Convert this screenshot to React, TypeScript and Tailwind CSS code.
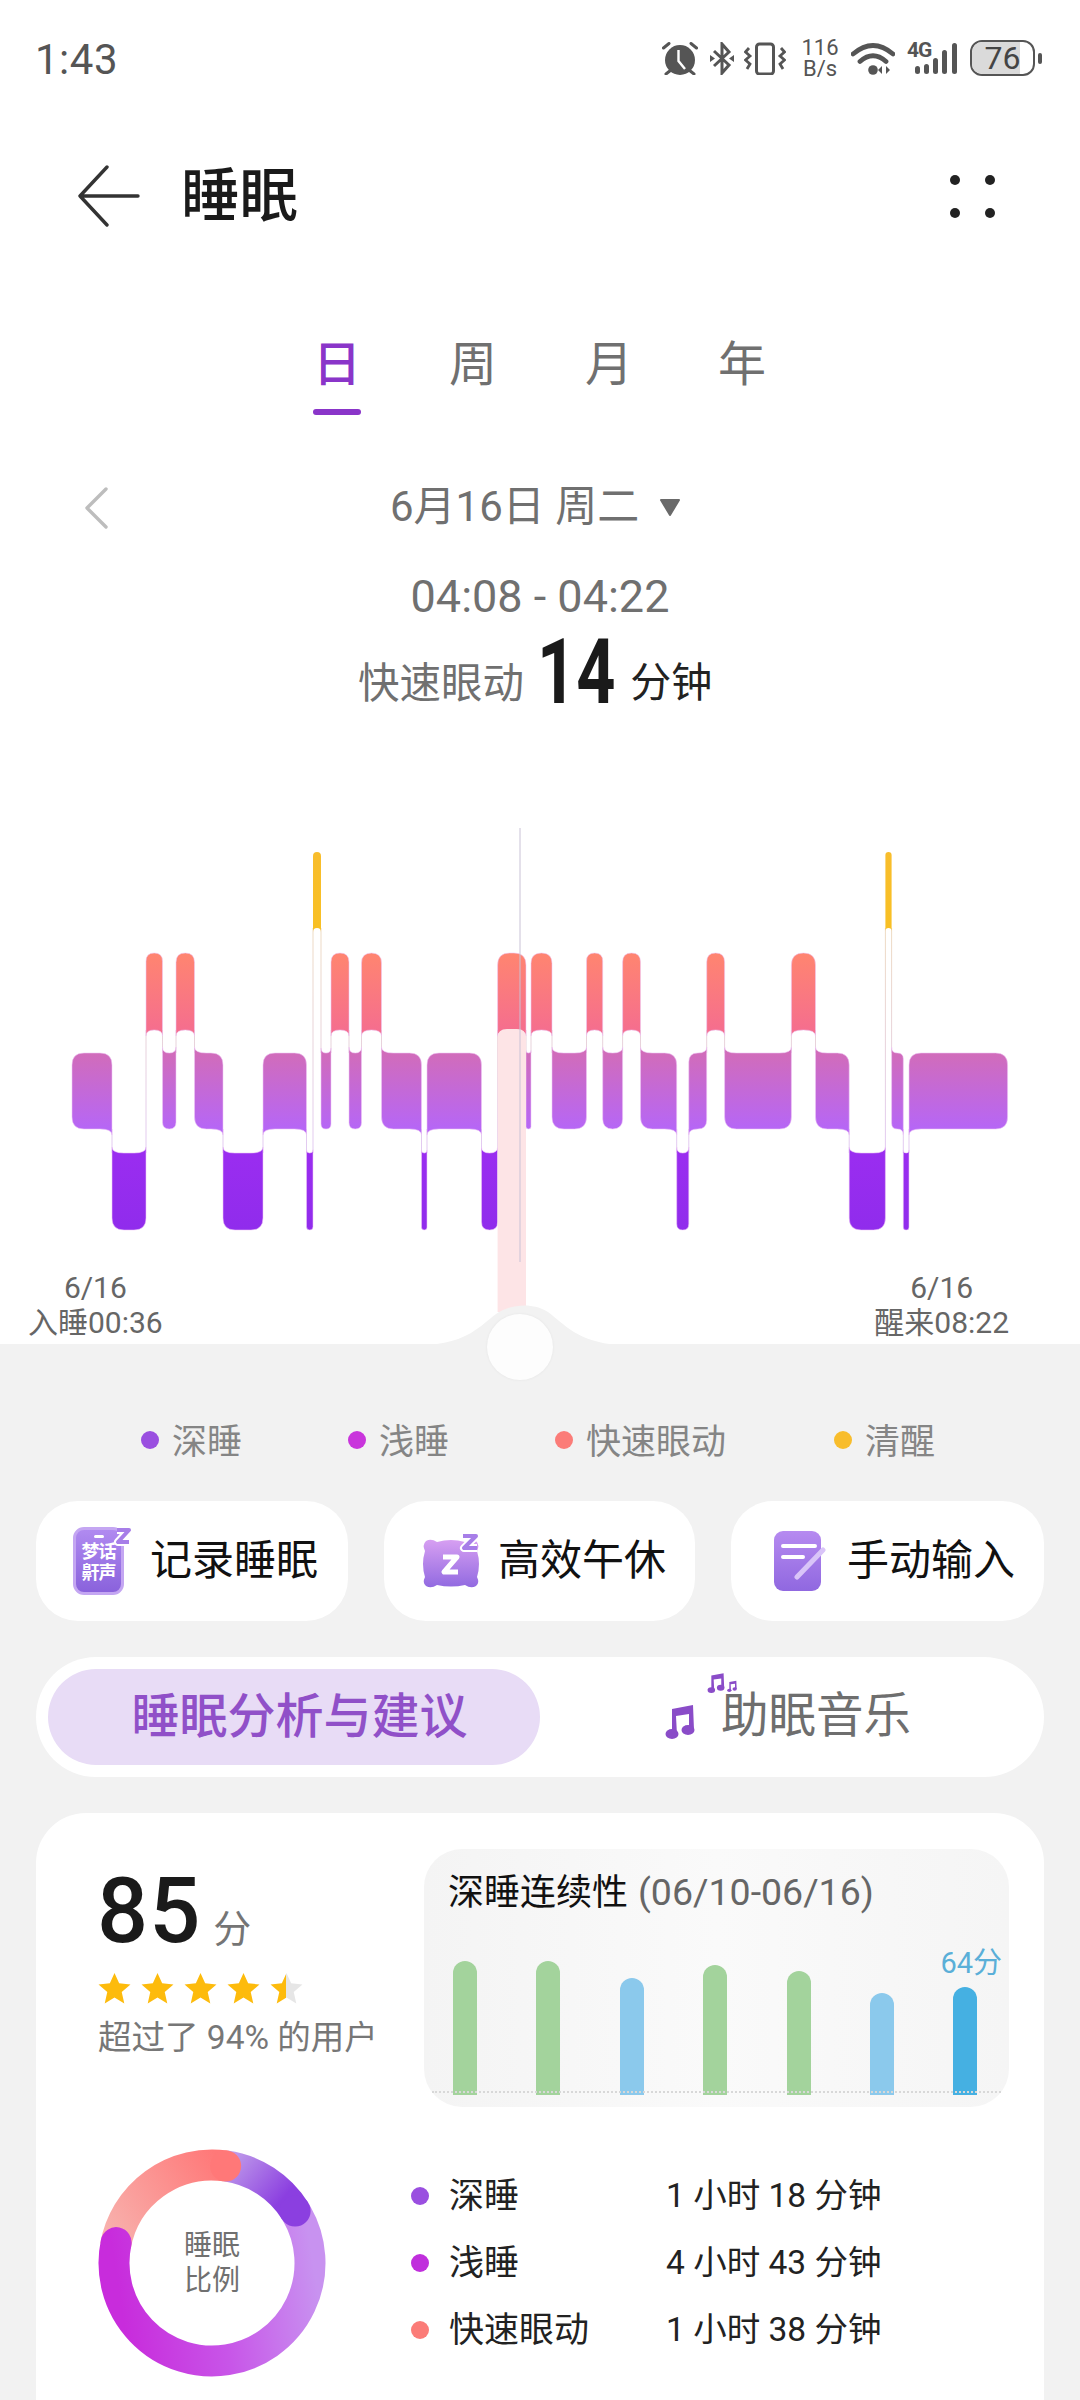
import React from "react";

type Level = "awake" | "rem" | "light" | "deep";

const bands: Record<Level, { top: number; bot: number; rank: number; fill: string }> = {
  awake: { top: 852, bot: 928, rank: 0, fill: "url(#awakeFill)" },
  rem: { top: 953, bot: 1030, rank: 1, fill: "url(#remFill)" },
  light: { top: 1053, bot: 1129, rank: 2, fill: "url(#lightFill)" },
  deep: { top: 1153, bot: 1230, rank: 3, fill: "url(#deepFill)" },
};

const segments: [Level, number, number][] = [
  ["light", 72, 112],
  ["deep", 112, 146],
  ["rem", 146, 162.5],
  ["light", 162.5, 176],
  ["rem", 176, 194.5],
  ["light", 194.5, 223],
  ["deep", 223, 263],
  ["light", 263, 306.5],
  ["deep", 306.5, 313],
  ["awake", 313, 321],
  ["light", 321, 331],
  ["rem", 331, 349],
  ["light", 349, 361.5],
  ["rem", 361.5, 381.5],
  ["light", 381.5, 421.5],
  ["deep", 421.5, 427],
  ["light", 427, 481.5],
  ["deep", 481.5, 497.6],
  ["rem", 497.6, 526],
  ["light", 526, 531],
  ["rem", 531, 552],
  ["light", 552, 586.5],
  ["rem", 586.5, 602.7],
  ["light", 602.7, 622.6],
  ["rem", 622.6, 640.5],
  ["light", 640.5, 676.7],
  ["deep", 676.7, 688.8],
  ["light", 688.8, 706.7],
  ["rem", 706.7, 724.6],
  ["light", 724.6, 791.4],
  ["rem", 791.4, 815.5],
  ["light", 815.5, 849.2],
  ["deep", 849.2, 885.4],
  ["awake", 885.4, 891.6],
  ["light", 891.6, 903.3],
  ["deep", 903.3, 909],
  ["light", 909, 1007.6],
];

// outline of one block: convex corners on the outside, small flares toward a neighbour band
function segmentPath(i: number) {
  const [level, x0, x1] = segments[i];
  const { top, bot, rank } = bands[level];
  const left = i > 0 ? bands[segments[i - 1][0]].rank : null;
  const right = i < segments.length - 1 ? bands[segments[i + 1][0]].rank : null;
  const r = Math.min(12, (x1 - x0) / 2);
  const f = Math.min(6, (x1 - x0) / 2);
  let d = "";
  if (left !== null && left < rank) d += `M${x0} ${top - f} Q${x0} ${top} ${x0 + r} ${top} `;
  else d += `M${x0} ${top + r} Q${x0} ${top} ${x0 + r} ${top} `;
  if (right !== null && right < rank) d += `L${x1 - r} ${top} Q${x1} ${top} ${x1} ${top - f} `;
  else d += `L${x1 - r} ${top} Q${x1} ${top} ${x1} ${top + r} `;
  if (right !== null && right > rank) d += `L${x1} ${bot + f} Q${x1} ${bot} ${x1 - r} ${bot} `;
  else d += `L${x1} ${bot - r} Q${x1} ${bot} ${x1 - r} ${bot} `;
  if (left !== null && left > rank) d += `L${x0 + r} ${bot} Q${x0} ${bot} ${x0} ${bot + f} `;
  else d += `L${x0 + r} ${bot} Q${x0} ${bot} ${x0} ${bot - r} `;
  return d + "Z";
}

function SleepChart() {
  return (
    <svg viewBox="0 820 1080 450" className="block h-[450px] w-[1080px] shrink-0 overflow-visible">
      <defs>
        <linearGradient id="awakeFill" x1="0" y1="852" x2="0" y2="928" gradientUnits="userSpaceOnUse">
          <stop offset="0" stopColor="#f8bd2c" />
          <stop offset="1" stopColor="#f8c024" />
        </linearGradient>
        <linearGradient id="remFill" x1="0" y1="953" x2="0" y2="1030" gradientUnits="userSpaceOnUse">
          <stop offset="0" stopColor="#ff8570" />
          <stop offset="1" stopColor="#f56e8e" />
        </linearGradient>
        <linearGradient id="lightFill" x1="0" y1="1053" x2="0" y2="1129" gradientUnits="userSpaceOnUse">
          <stop offset="0" stopColor="#d16cba" />
          <stop offset="1" stopColor="#b666f6" />
        </linearGradient>
        <linearGradient id="deepFill" x1="0" y1="1153" x2="0" y2="1230" gradientUnits="userSpaceOnUse">
          <stop offset="0" stopColor="#9a2df0" />
          <stop offset="1" stopColor="#902cec" />
        </linearGradient>
        <linearGradient id="joinLine" x1="0" y1="928" x2="0" y2="1153" gradientUnits="userSpaceOnUse">
          <stop offset="0" stopColor="#e8cfae" />
          <stop offset="1" stopColor="#d8b8ee" />
        </linearGradient>
      </defs>
      {segments.slice(0, -1).map(([level, , x1], i) => {
        const a = bands[level];
        const b = bands[segments[i + 1][0]];
        const upper = a.rank < b.rank ? a : b;
        const lower = a.rank < b.rank ? b : a;
        return <line key={i} x1={x1} x2={x1} y1={upper.bot} y2={lower.top} stroke="url(#joinLine)" strokeOpacity="0.75" strokeWidth="1" />;
      })}
      {segments.map(([level], i) => (
        <path key={i} d={segmentPath(i)} fill={bands[level].fill} stroke={level === "awake" ? "none" : "#eec6f6"} strokeOpacity="0.55" strokeWidth="1" />
      ))}
      <path d="M497.6 1312 L497.6 1038 Q497.6 1029 507 1029 L517 1029 Q526 1029 526 1038 L526 1312 Z" fill="#fde4e6" />
      <line x1="520" x2="520" y1="828" y2="1262" stroke="#c9c2d6" strokeWidth="1" />
    </svg>
  );
}

function AlarmIcon() {
  return (
    <svg viewBox="0 0 36 33" className="h-[33px] w-[36px]">
      <circle cx="18" cy="18" r="15" fill="#555" />
      <path d="M16.5 8 L16.5 19 L23 27" fill="none" stroke="#fff" strokeWidth="2.4" />
      <path d="M1.5 6 L7 1.5 M34.5 6 L29 1.5 M4 32 L9 28 M32 32 L27 28" stroke="#555" strokeWidth="3" strokeLinecap="round" />
    </svg>
  );
}

function BluetoothIcon() {
  return (
    <svg viewBox="0 0 24 33" className="h-[33px] w-[24px]">
      <path d="M4 9 L19 23 L12 31 L12 2 L19 10 L4 24" fill="none" stroke="#555" strokeWidth="3" />
      <path d="M0 13 L5 16.5 L0 20 Z M24 13 L19 16.5 L24 20 Z" fill="#555" />
    </svg>
  );
}

function VibrateIcon() {
  return (
    <svg viewBox="0 0 42 33" className="h-[33px] w-[42px]">
      <rect x="12.5" y="2" width="17" height="30" rx="3" fill="none" stroke="#555" strokeWidth="3" />
      <path d="M5 6 L1.5 10 L6 14 L1.5 18 L6 22 L3 27 M37 6 L40.5 10 L36 14 L40.5 18 L36 22 L39 27" fill="none" stroke="#555" strokeWidth="2.8" />
    </svg>
  );
}

function WifiIcon() {
  return (
    <svg viewBox="0 0 44 33" className="h-[33px] w-[44px]">
      <path d="M2 12 Q22 -5 42 12 M9 19.5 Q22 8 35 19.5" fill="none" stroke="#555" strokeWidth="4.8" strokeLinecap="round" />
      <circle cx="22" cy="28" r="4.8" fill="#555" />
      <path d="M31 24 L31 32 L27 28 Z M35 24 L35 32 L39 28 Z" fill="#555" />
    </svg>
  );
}

function SignalIcon() {
  const bars = [
    [8, 8],
    [17, 10],
    [26, 16],
    [35, 24],
    [45, 31],
  ];
  return (
    <div className="relative h-[33px] w-[50px]">
      <span className="absolute left-0 top-[-3px] text-[21px] font-bold leading-[22px] tracking-[-1px] text-[#555]">4G</span>
      <svg viewBox="0 0 50 33" className="absolute left-0 top-0 h-[33px] w-[50px]">
        {bars.map(([x, h]) => (
          <rect key={x} x={x} y={32 - h} width="5" height={h} rx="2.5" fill="#555" />
        ))}
      </svg>
    </div>
  );
}

function StatusBar() {
  return (
    <div className="flex h-[116px] shrink-0 items-center justify-between pl-[35px] pr-[38px]">
      <span className="pt-[2px] text-[42px] tracking-[0.5px] text-[#555]">1:43</span>
      <div className="flex items-center">
        <AlarmIcon />
        <div className="ml-[12px]"><BluetoothIcon /></div>
        <div className="ml-[10px]"><VibrateIcon /></div>
        <div className="ml-[16px] flex w-[36px] flex-col items-center text-[22px] leading-[21px] text-[#555]">
          <span>116</span>
          <span>B/s</span>
        </div>
        <div className="ml-[13px]"><WifiIcon /></div>
        <div className="ml-[12px]"><SignalIcon /></div>
        <div className="relative ml-[13px] flex h-[36px] w-[65px] items-center justify-center overflow-hidden rounded-[12px] border-[2.5px] border-[#555]">
          <div className="absolute inset-y-0 left-0 w-[48px] bg-[#dadada]" />
          <span className="relative text-[32px] text-[#444]">76</span>
        </div>
        <div className="ml-[3px] h-[11px] w-[4px] rounded-full bg-[#555]" />
      </div>
    </div>
  );
}

function Header() {
  return (
    <div className="flex h-[160px] shrink-0 items-center">
      <svg viewBox="0 0 62 64" className="ml-[78px] h-[64px] w-[62px]">
        <path d="M29 3 L2 32 L29 61 M2 32 L60 32" fill="none" stroke="#333" strokeWidth="3.4" strokeLinecap="round" strokeLinejoin="round" />
      </svg>
      <span className="ml-[41px] text-[58.5px] font-medium leading-none text-[#1a1a1a]">睡眠</span>
      <div className="ml-auto mr-[85px] grid grid-cols-2 gap-x-[25px] gap-y-[23px]">
        <span className="h-[10px] w-[10px] rounded-full bg-[#222]" />
        <span className="h-[10px] w-[10px] rounded-full bg-[#222]" />
        <span className="h-[10px] w-[10px] rounded-full bg-[#222]" />
        <span className="h-[10px] w-[10px] rounded-full bg-[#222]" />
      </div>
    </div>
  );
}

function PeriodTabs() {
  return (
    <div className="flex h-[139px] shrink-0 items-start pl-[313px] pt-[60px]">
      <div className="flex w-[48px] flex-col items-center">
        <span className="text-[48px] font-medium leading-[58px] text-[#8a35c9]">日</span>
        <span className="mt-[15px] h-[6px] w-[48px] rounded-full bg-[#8a35c9]" />
      </div>
      <span className="ml-[88px] w-[48px] text-[48px] leading-[58px] text-[#707070]">周</span>
      <span className="ml-[88px] w-[48px] text-[48px] leading-[58px] text-[#707070]">月</span>
      <span className="ml-[85px] w-[48px] text-[48px] leading-[58px] text-[#707070]">年</span>
    </div>
  );
}

function DateBlock() {
  return (
    <div className="flex h-[405px] shrink-0 flex-col">
      <div className="relative mt-[62px] flex h-[60px] items-center pl-[390px]">
        <svg viewBox="0 0 24 42" className="absolute left-[84px] top-[10px] h-[42px] w-[24px]">
          <path d="M22 2 L3 21 L22 40" fill="none" stroke="#bdbdbd" strokeWidth="3.4" strokeLinecap="round" strokeLinejoin="round" />
        </svg>
        <span className="text-[42px] leading-none text-[#707070]">6月16日 周二</span>
        <svg viewBox="0 0 22 18" className="ml-[20px] h-[18px] w-[22px]">
          <path d="M2 2 L20 2 L11 17 Z" fill="#6a6a6a" stroke="#6a6a6a" strokeWidth="2" strokeLinejoin="round" />
        </svg>
      </div>
      <div className="mt-[31px] flex h-[56px] items-center justify-center text-[45px] leading-none text-[#707070]">04:08 - 04:22</div>
      <div className="flex h-[100px] items-center pl-[358px]">
        <span className="mt-[20px] text-[41.5px] leading-none text-[#707070]">快速眼动</span>
        <span className="mb-[3px] ml-[13px] mr-[-25px] inline-block origin-left scale-x-[0.76] text-[90px] font-bold leading-[100px] text-[#1a1a1a]">14</span>
        <span className="ml-[15px] mt-[18px] text-[41px] leading-none text-[#222]">分钟</span>
      </div>
    </div>
  );
}

function ChartLabels() {
  return (
    <div className="flex h-[74px] shrink-0 items-start justify-between pl-[28px] pr-[71px] text-[30px] leading-[35px] text-[#666]">
      <div className="flex flex-col items-center">
        <span>6/16</span>
        <span>入睡00:36</span>
      </div>
      <div className="flex flex-col items-center">
        <span>6/16</span>
        <span>醒来08:22</span>
      </div>
    </div>
  );
}

function Legend() {
  const items = [
    { label: "深睡", dot: "bg-[#9a4fe0]", width: "w-[207px]" },
    { label: "浅睡", dot: "bg-[#c935dc]", width: "w-[207px]" },
    { label: "快速眼动", dot: "bg-[#fb7c78]", width: "w-[279px]" },
    { label: "清醒", dot: "bg-[#f8bd2c]", width: "w-[200px]" },
  ];
  return (
    <div className="flex h-[50px] items-center pl-[141px]">
      {items.map((item) => (
        <div key={item.label} className={`flex items-center gap-[13px] ${item.width}`}>
          <span className={`h-[18px] w-[18px] rounded-full ${item.dot}`} />
          <span className="pt-[4px] text-[35px] leading-none text-[#858585]">{item.label}</span>
        </div>
      ))}
    </div>
  );
}

function DreamIcon() {
  return (
    <div className="relative h-[68px] w-[58px]">
      <div className="flex h-[68px] w-[51px] flex-col items-center rounded-[11px] border-[3px] border-[#c4a6f2] bg-linear-to-b from-[#b08af0] to-[#8a62dc] pt-[5px]">
        <span className="h-[3px] w-[10px] rounded-full bg-white" />
        <span className="mt-[3px] text-[18px] font-bold leading-[21px] tracking-[-1px] text-white">梦话</span>
        <span className="text-[18px] font-bold leading-[21px] tracking-[-1px] text-white">鼾声</span>
      </div>
      <svg viewBox="0 0 22 22" className="absolute right-[-3px] top-[-2px] h-[22px] w-[22px]">
        <path d="M5 5 L17 5 L6 17 L17 17" fill="none" stroke="#fff" strokeWidth="8" strokeLinejoin="round" />
        <path d="M5 5 L17 5 L6 17 L17 17" fill="none" stroke="#a77ee8" strokeWidth="4" strokeLinejoin="round" />
      </svg>
    </div>
  );
}

function NapIcon() {
  return (
    <svg viewBox="0 0 60 56" className="h-[56px] w-[60px]">
      <defs>
        <linearGradient id="napFill" x1="0" y1="6" x2="0" y2="56" gradientUnits="userSpaceOnUse">
          <stop offset="0" stopColor="#d8a0f2" />
          <stop offset="1" stopColor="#8f68e0" />
        </linearGradient>
      </defs>
      <path d="M5 8 Q10 5 16 9 Q30 5 44 9 Q50 5 55 8 Q59 12 56 18 Q60 31 56 44 Q59 50 55 53 Q50 56 44 52 Q30 55 16 52 Q10 56 5 53 Q1 50 4 44 Q0 31 4 18 Q1 12 5 8 Z" fill="url(#napFill)" />
      <path d="M22 24 L36 24 L23 39 L37 39" fill="none" stroke="#fff" strokeWidth="5" strokeLinejoin="round" />
      <path d="M42 3 L55 3 L43 15 L56 15" fill="none" stroke="#fff" strokeWidth="8" strokeLinejoin="round" />
      <path d="M42 3 L55 3 L43 15 L56 15" fill="none" stroke="#a77ee8" strokeWidth="4" strokeLinejoin="round" />
    </svg>
  );
}

function EntryIcon() {
  return (
    <svg viewBox="0 0 52 60" className="h-[60px] w-[52px]">
      <defs>
        <linearGradient id="entryFill" x1="0" y1="0" x2="0" y2="60" gradientUnits="userSpaceOnUse">
          <stop offset="0" stopColor="#b68af0" />
          <stop offset="1" stopColor="#9068e0" />
        </linearGradient>
      </defs>
      <rect x="0" y="0" width="47" height="60" rx="9" fill="url(#entryFill)" />
      <path d="M9 15 L41 15 M9 26 L29 26" stroke="#fff" strokeWidth="4" strokeLinecap="round" />
      <path d="M23 46 L49 19" stroke="#d9c4f8" strokeWidth="5" strokeLinecap="round" />
    </svg>
  );
}

function QuickActions() {
  return (
    <div className="mt-[36px] flex gap-[36px] px-[36px]">
      <div className="flex h-[120px] w-[312px] items-center gap-[19px] rounded-[42px] bg-white pl-[37px]">
        <DreamIcon />
        <span className="text-[42px] leading-none text-[#111]">记录睡眠</span>
      </div>
      <div className="flex h-[120px] w-[311px] items-center gap-[17px] rounded-[42px] bg-white pl-[37px]">
        <NapIcon />
        <span className="text-[42px] leading-none text-[#111]">高效午休</span>
      </div>
      <div className="flex h-[120px] w-[313px] items-center gap-[21px] rounded-[42px] bg-white pl-[43px]">
        <EntryIcon />
        <span className="text-[42px] leading-none text-[#111]">手动输入</span>
      </div>
    </div>
  );
}

function NoteGlyph({ className }: { className: string }) {
  return (
    <svg viewBox="0 0 30 36" className={className}>
      <path d="M7 6 L28 2 L29 27 L24 27 L24 11 L11 13 L12 32 L7 32 Z" fill="#8a4cc8" />
      <ellipse cx="7" cy="31" rx="6.5" ry="5" fill="#8a4cc8" />
      <ellipse cx="23" cy="27" rx="6.5" ry="5" fill="#8a4cc8" />
    </svg>
  );
}

function AnalysisTabs() {
  return (
    <div className="mx-[36px] mt-[36px] flex h-[120px] items-center rounded-[60px] bg-white pl-[12px]">
      <div className="flex h-[96px] w-[492px] items-center justify-center rounded-[48px] bg-[#e8dcf6] pl-[11px] text-[48px] font-medium leading-none text-[#9050c8]">睡眠分析与建议</div>
      <div className="relative flex h-[96px] flex-1 items-center pl-[125px]">
        <NoteGlyph className="mt-[8px] h-[36px] w-[30px]" />
        <span className="ml-[26px] text-[47.5px] leading-none text-[#6e6e6e]">助眠音乐</span>
        <NoteGlyph className="absolute left-[167px] top-[3px] h-[21px] w-[18px]" />
        <NoteGlyph className="absolute left-[187px] top-[11px] h-[12px] w-[10px]" />
      </div>
    </div>
  );
}

function Stars() {
  const star = "16,1 20.5,11 31.5,12 23,19.5 25.5,30.5 16,24.8 6.5,30.5 9,19.5 0.5,12 11.5,11";
  return (
    <div className="flex gap-[10px]">
      {[0, 1, 2, 3].map((i) => (
        <svg key={i} viewBox="0 0 32 32" className="h-[33px] w-[33px]">
          <polygon points={star} fill="#fdbb0c" />
        </svg>
      ))}
      <svg viewBox="0 0 32 32" className="h-[33px] w-[33px]">
        <defs>
          <linearGradient id="halfStar" x1="0" y1="0" x2="1" y2="0">
            <stop offset="0.5" stopColor="#fdbb0c" />
            <stop offset="0.5" stopColor="#e6e6e6" />
          </linearGradient>
        </defs>
        <polygon points={star} fill="url(#halfStar)" />
      </svg>
    </div>
  );
}

function ContinuityPanel() {
  const bars = [
    { h: "h-[134px]", c: "bg-[#a3d39c]" },
    { h: "h-[134px]", c: "bg-[#a3d39c]" },
    { h: "h-[117px]", c: "bg-[#8bc9ec]" },
    { h: "h-[130px]", c: "bg-[#a3d39c]" },
    { h: "h-[124px]", c: "bg-[#a3d39c]" },
    { h: "h-[102px]", c: "bg-[#8bc9ec]" },
    { h: "h-[108px]", c: "bg-[#45b0e2]" },
  ];
  return (
    <div className="relative flex h-[258px] w-[585px] flex-col rounded-[38px] bg-linear-to-r from-[#f4f4f4] via-[#fafafa] to-[#f5f5f5] pl-[24px]">
      <div className="mt-[24px] flex h-[40px] items-center">
        <span className="text-[36px] leading-none text-[#111]">深睡连续性</span>
        <span className="ml-[10px] text-[37.5px] leading-none text-[#666]">(06/10-06/16)</span>
      </div>
      <div className="absolute bottom-[12px] left-[29px] flex items-end gap-[59.4px]">
        {bars.map((bar, i) => (
          <div key={i} className={`w-[24px] rounded-t-full ${bar.h} ${bar.c}`} />
        ))}
      </div>
      <div className="absolute bottom-[14px] left-[8px] right-[8px] border-t-2 border-dotted border-[#d8d8d8]" />
      <span className="absolute right-[7px] top-[97px] text-[29px] leading-[34px] text-[#5aafd8]">64分</span>
    </div>
  );
}

function polar(angle: number) {
  const rad = ((angle - 90) * Math.PI) / 180;
  return { x: 114 + 98 * Math.cos(rad), y: 114 + 98 * Math.sin(rad) };
}

function arc(a0: number, a1: number) {
  const p0 = polar(a0);
  const p1 = polar(a1);
  const large = a1 - a0 > 180 ? 1 : 0;
  return `M${p0.x} ${p0.y} A98 98 0 ${large} 1 ${p1.x} ${p1.y}`;
}

function Donut() {
  const remEnd = polar(8);
  return (
    <div className="relative h-[228px] w-[228px] shrink-0">
      <svg viewBox="0 0 228 228" className="h-[228px] w-[228px]">
        <defs>
          <linearGradient id="donutDeep" x1="125" y1="16" x2="190" y2="70" gradientUnits="userSpaceOnUse">
            <stop offset="0" stopColor="#c09cea" />
            <stop offset="0.8" stopColor="#8b3fe0" />
          </linearGradient>
          <linearGradient id="donutLight" x1="210" y1="80" x2="16" y2="110" gradientUnits="userSpaceOnUse">
            <stop offset="0" stopColor="#c892f0" />
            <stop offset="0.5" stopColor="#c855e8" />
            <stop offset="1" stopColor="#c82cdc" />
          </linearGradient>
          <linearGradient id="donutRem" x1="16" y1="90" x2="125" y2="16" gradientUnits="userSpaceOnUse">
            <stop offset="0" stopColor="#f8b0ac" />
            <stop offset="1" stopColor="#ff7878" />
          </linearGradient>
        </defs>
        <path d={arc(280, 368)} fill="none" stroke="url(#donutRem)" strokeWidth="31" />
        <path d={arc(60, 282)} fill="none" stroke="url(#donutLight)" strokeWidth="31" strokeLinecap="round" />
        <path d={arc(8, 58)} fill="none" stroke="url(#donutDeep)" strokeWidth="31" />
        <circle cx={polar(58).x} cy={polar(58).y} r="15.5" fill="#8b3fe0" />
        <circle cx={remEnd.x} cy={remEnd.y} r="15.5" fill="#ff7878" />
      </svg>
      <div className="absolute inset-0 flex flex-col items-center justify-center text-[28px] leading-[35px] text-[#707070]">
        <span>睡眠</span>
        <span>比例</span>
      </div>
    </div>
  );
}

function StageList() {
  const rows = [
    { label: "深睡", value: "1 小时 18 分钟", dot: "bg-[#9a4fe0]" },
    { label: "浅睡", value: "4 小时 43 分钟", dot: "bg-[#c02fdc]" },
    { label: "快速眼动", value: "1 小时 38 分钟", dot: "bg-[#fb7c78]" },
  ];
  return (
    <div className="ml-[85px] mt-[13px] flex flex-col">
      {rows.map((row) => (
        <div key={row.label} className="flex h-[67px] items-center leading-none text-[#222]">
          <span className={`h-[18px] w-[18px] rounded-full ${row.dot}`} />
          <span className="ml-[20px] w-[217px] pt-[2px] text-[35px]">{row.label}</span>
          <span className="whitespace-nowrap text-[33.5px]">{row.value}</span>
        </div>
      ))}
    </div>
  );
}

function ScoreCard() {
  return (
    <div className="mx-[36px] mt-[36px] flex-1 rounded-t-[50px] bg-white pl-[62px] pt-[36px]">
      <div className="flex">
        <div className="flex w-[326px] flex-col pt-[13px]">
          <div className="flex h-[100px] items-baseline">
            <span className="ml-[-1px] text-[90px] font-medium leading-[100px] tracking-[1px] text-[#1a1a1a]">85</span>
            <span className="ml-[12px] text-[38px] leading-none text-[#757575]">分</span>
          </div>
          <div className="mt-[10px]"><Stars /></div>
          <span className="mt-[14px] whitespace-nowrap text-[33.5px] leading-[38px] text-[#777]">超过了 94% 的用户</span>
        </div>
        <ContinuityPanel />
      </div>
      <div className="mt-[42px] flex">
        <Donut />
        <StageList />
      </div>
    </div>
  );
}

export default function App() {
  return (
    <div className="flex h-[2400px] w-[1080px] flex-col overflow-hidden bg-white font-[Roboto,'Noto_Sans_CJK_SC',sans-serif]">
      <StatusBar />
      <Header />
      <PeriodTabs />
      <DateBlock />
      <SleepChart />
      <ChartLabels />
      <div className="relative flex flex-1 flex-col bg-[#f2f2f2] pt-[71px]">
        <svg viewBox="0 0 190 41" className="absolute left-[428px] top-[-40px] h-[41px] w-[190px]">
          <path d="M0 41 C40 38 52 22 68 10 C82 0 105 -2 120 8 C136 20 150 38 190 41 Z" fill="#f2f2f2" />
        </svg>
        <div className="absolute left-[487px] top-[-30px] h-[66px] w-[66px] rounded-full bg-[#fdfdfd] shadow-[0_0_3px_rgba(0,0,0,0.06)]" />
        <Legend />
        <QuickActions />
        <AnalysisTabs />
        <ScoreCard />
      </div>
    </div>
  );
}
